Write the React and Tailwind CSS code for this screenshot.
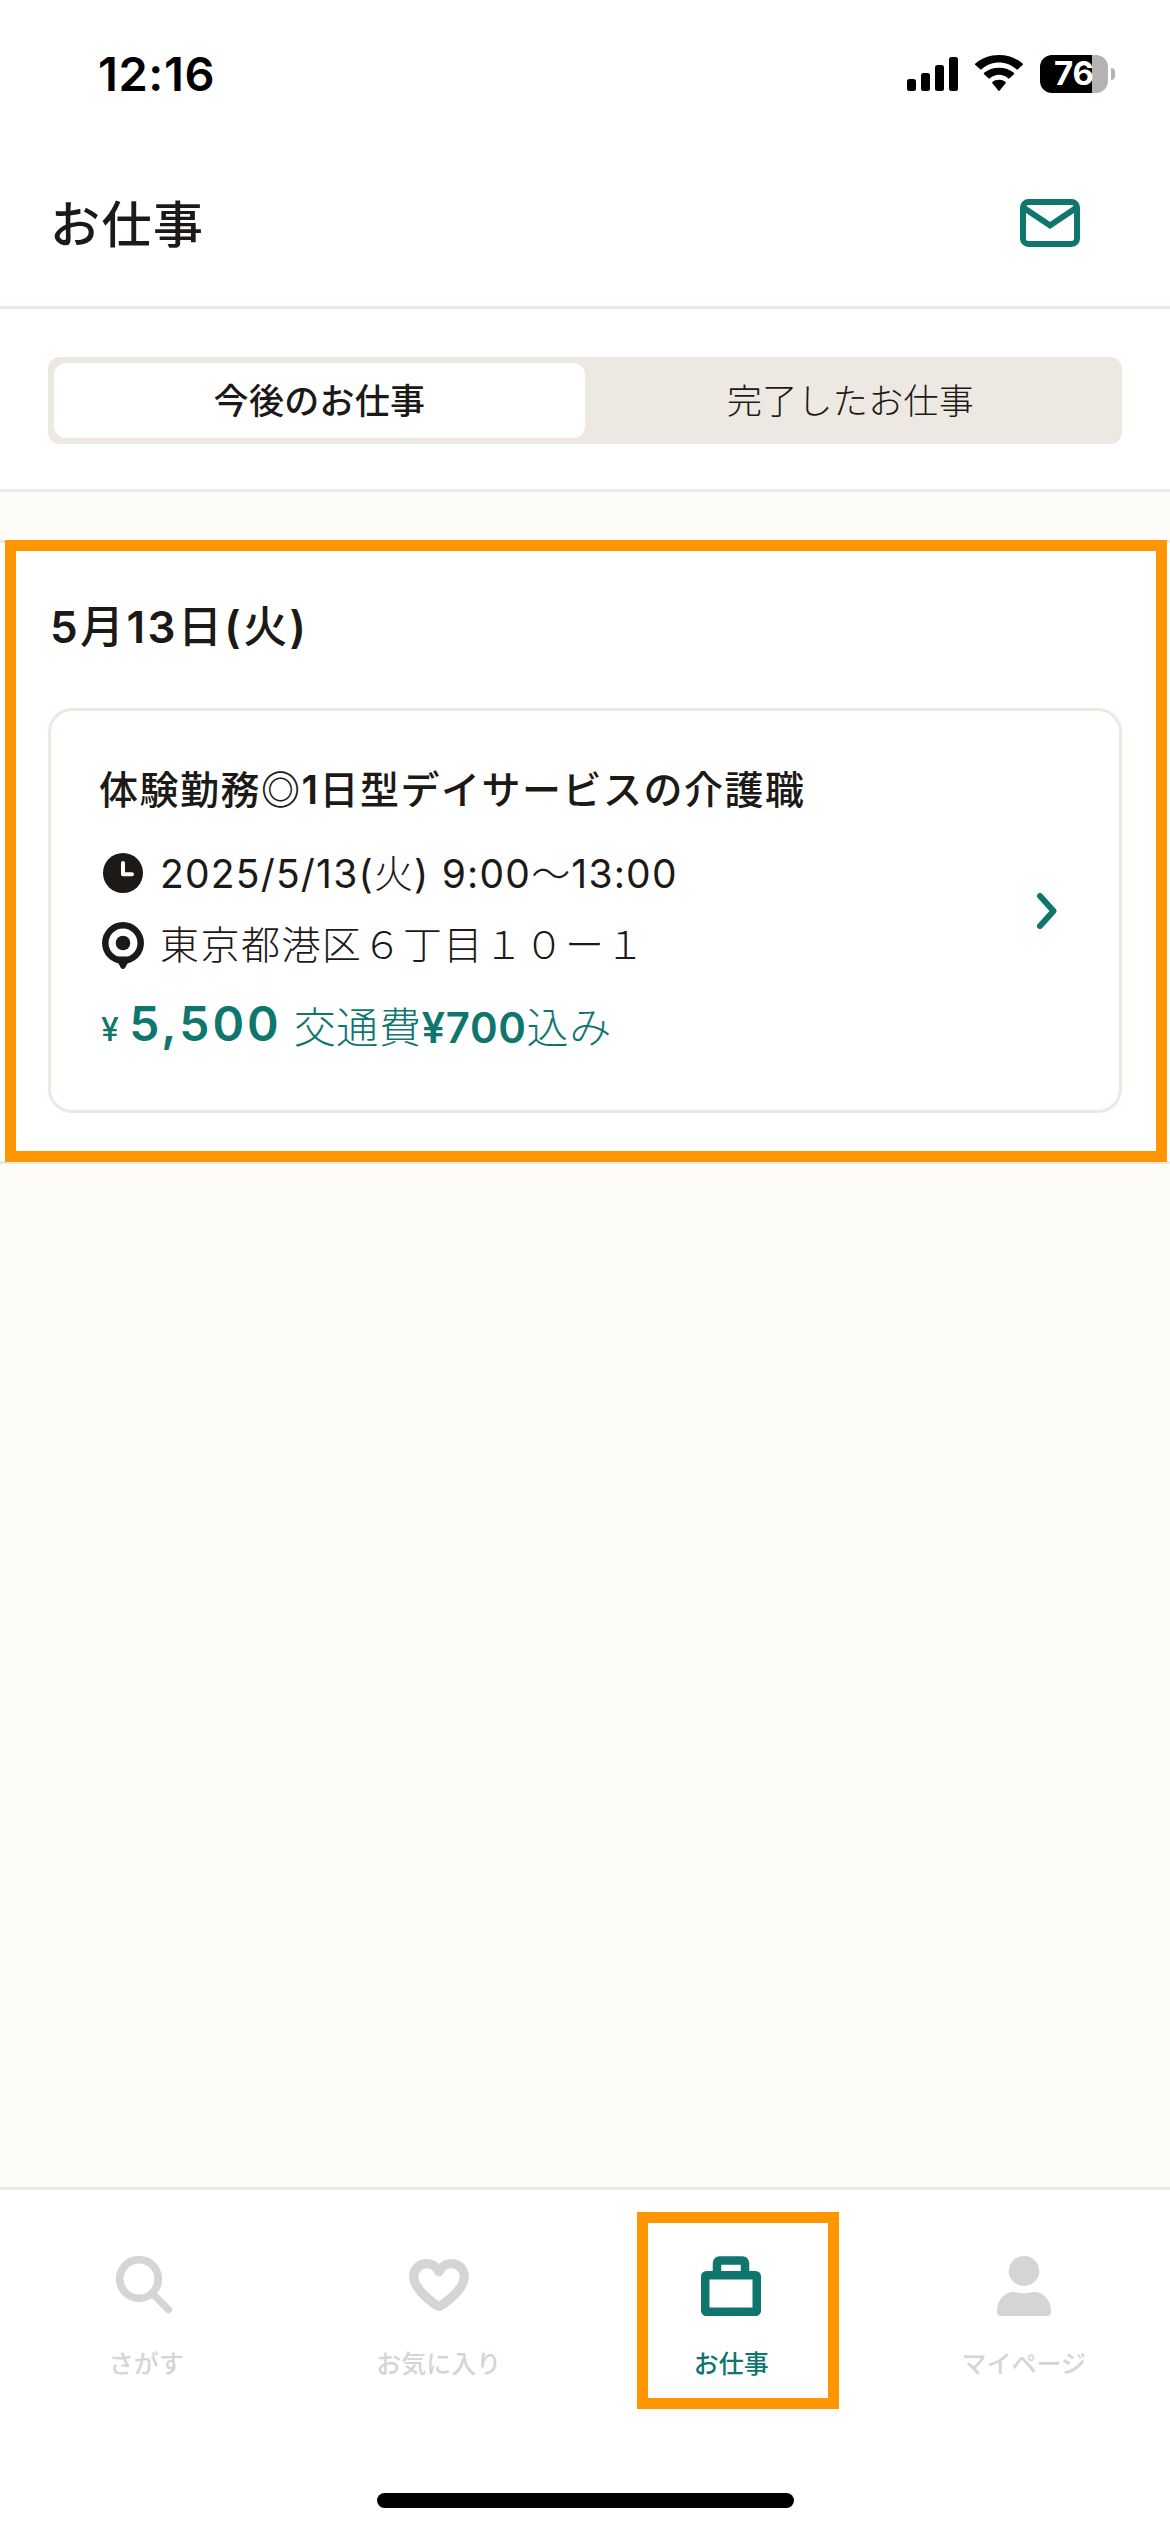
import React from "react";

const SignalIcon = () => (
    <svg className="w-[51px] h-[34px]" viewBox="0 0 51 34" fill="currentColor">
        <rect x="0" y="22" width="9" height="12" rx="2.5" />
        <rect x="14" y="16" width="9" height="18" rx="2.5" />
        <rect x="28" y="8" width="9" height="26" rx="2.5" />
        <rect x="42" y="0" width="9" height="34" rx="2.5" />
    </svg>
);

const WifiIcon = () => (
    <svg className="w-[48px] h-[36px]" viewBox="0 0 48 36" fill="currentColor">
        <path d="M24 7.4c6.7 0 12.8 2.6 17.4 6.9a1 1 0 0 0 1.4 0l4.8-4.3a1 1 0 0 0 0-1.5C41.3 3.2 33.1 0 24 0S6.7 3.2.4 8.5a1 1 0 0 0 0 1.5l4.8 4.3a1 1 0 0 0 1.4 0C11.2 10 17.3 7.4 24 7.4z" />
        <path d="M24 19.8c3.5 0 6.7 1.3 9.1 3.5a1 1 0 0 0 1.4 0l4.4-4a1 1 0 0 0 0-1.5C35 14.6 29.7 12.7 24 12.7S13 14.6 9.1 17.8a1 1 0 0 0 0 1.5l4.4 4a1 1 0 0 0 1.4 0c2.4-2.2 5.6-3.5 9.1-3.5z" />
        <path d="M30.6 28.2a.9.9 0 0 0 0-1.3A10.5 10.5 0 0 0 24 24.8c-2.5 0-4.8.8-6.6 2.1a.9.9 0 0 0 0 1.3l5.9 7.4a.9.9 0 0 0 1.4 0z" />
    </svg>
);

const MailIcon = () => (
    <svg
        className="w-[60px] h-[48px] text-[#0f766e]"
        viewBox="0 0 60 48"
        fill="none"
        stroke="currentColor"
        strokeWidth="6"
    >
        <rect x="3" y="3" width="54" height="42" rx="5.5" />
        <path d="M4 9l26 17.5L56 9" />
    </svg>
);

const ClockIcon = () => (
    <svg className="w-[42px] h-[42px]" viewBox="0 0 42 42">
        <circle cx="21" cy="21" r="20" fill="currentColor" />
        <path
            d="M21 11v11.2h9"
            fill="none"
            stroke="#fff"
            strokeWidth="4"
            strokeLinecap="round"
            strokeLinejoin="round"
        />
    </svg>
);

const PinIcon = () => (
    <svg className="w-[42px] h-[48px]" viewBox="0 0 42 48">
        <circle
            cx="21"
            cy="21"
            r="17.7"
            fill="none"
            stroke="currentColor"
            strokeWidth="6.5"
        />
        <circle cx="21" cy="21" r="7.3" fill="currentColor" />
        <path
            d="M12 34.5h18l-2.5 5.5c-2 0-2.5 3-4.5 6a2.4 2.4 0 0 1-4 0c-2-3-2.5-6-4.5-6z"
            fill="currentColor"
        />
    </svg>
);

const ChevronIcon = () => (
    <svg
        className="w-[20px] h-[36px] text-[#0f766e]"
        viewBox="0 0 20 36"
        fill="none"
        stroke="currentColor"
        strokeWidth="6"
        strokeLinecap="round"
        strokeLinejoin="round"
    >
        <path d="M3 3l13.5 15L3 33" />
    </svg>
);

const SearchIcon = () => (
    <svg
        className="w-[60px] h-[60px]"
        viewBox="0 0 60 60"
        fill="none"
        stroke="currentColor"
        strokeLinecap="round"
    >
        <circle cx="23" cy="23" r="19.3" strokeWidth="7.7" />
        <path d="M38 39l14.5 14.8" strokeWidth="7.2" />
    </svg>
);

const HeartIcon = () => (
    <svg
        className="w-[60px] h-[60px]"
        viewBox="0 0 60 60"
        fill="none"
        stroke="currentColor"
        strokeWidth="9.3"
        strokeLinecap="round"
        strokeLinejoin="round"
    >
        <path d="M30 50.4C24 47.5 4.7 33 4.7 21 4.7 13 10.5 7.7 17.5 7.7c6 0 10 3 12.5 8 2.5-5 6.5-8 12.5-8 7 0 12.8 5.3 12.8 13.3 0 12-19.3 26.5-25.3 29.4z" />
    </svg>
);

const BagIcon = () => (
    <svg
        className="w-[60px] h-[60px]"
        viewBox="0 0 60 60"
        fill="none"
        stroke="currentColor"
        strokeWidth="8.5"
    >
        <rect x="4.25" y="19.25" width="51.5" height="36.5" rx="1" />
        <path d="M16 19V7a2.5 2.5 0 0 1 2.5-2.5h23A2.5 2.5 0 0 1 44 7v12" />
    </svg>
);

const UserIcon = () => (
    <svg className="w-[60px] h-[60px]" viewBox="0 0 60 60" fill="currentColor">
        <ellipse cx="30" cy="15" rx="15.3" ry="15" />
        <path d="M3 55.5C3 44 10 36 20 36c3.5 0 5 1.2 10 1.2S36.5 36 40 36c10 0 17 8 17 19.5 0 3-1.5 4.5-4 4.5H7c-2.5 0-4-1.5-4-4.5z" />
    </svg>
);

const tabs = [
    { label: "さがす", icon: SearchIcon },
    { label: "お気に入り", icon: HeartIcon },
    { label: "お仕事", icon: BagIcon, active: true },
    { label: "マイページ", icon: UserIcon },
];

function StatusBar() {
    return (
        <div className="flex h-[150px] items-start justify-between pl-[98px] pr-[55px] text-black">
            <div className="mt-[45px] text-[47px] leading-[58px] font-semibold tracking-[0.6px]">
                12:16
            </div>
            <div className="mt-[55px] flex h-[38px] items-start">
                <div className="mt-[2px] mr-[17px]">
                    <SignalIcon />
                </div>
                <WifiIcon />
                <div className="ml-[17px] flex h-[38px] w-[68px] items-center justify-center rounded-[12px] bg-linear-to-r from-black from-[76.5%] to-[#b3b3b3] to-[76.5%] text-[33px] font-bold text-white">
                    76
                </div>
                <div className="ml-[3px] mt-[13px] h-[12px] w-[4px] rounded-r-full bg-[#b3b3b3]" />
            </div>
        </div>
    );
}

function JobCard() {
    return (
        <div className="mx-[48px] flex h-[405px] items-center justify-between rounded-[24px] border-[3px] border-[#ede8e1] pl-[48px] pr-[62px]">
            <div className="h-[399px] pt-[51px] text-[39px] tracking-[1.5px]">
                <h3 className="h-[54px] leading-[50px] font-medium whitespace-nowrap">
                    体験勤務
                    <span className="font-['Noto_Sans_CJK_JP',sans-serif] font-bold">
                        ◎
                    </span>
                    <span className="font-semibold">1</span>
                    日型デイサービスの介護職
                </h3>
                <div className="mt-[30px] flex h-[54px] items-center gap-[16px] pl-[3px]">
                    <ClockIcon />
                    <span className="pt-[2px] leading-[54px] tracking-[1.2px] whitespace-nowrap">
                        2025/5/13(<span className="font-light">火</span>){" "}
                        9:00<span className="font-light">〜</span>13:00
                    </span>
                </div>
                <div className="mt-[16px] flex h-[54px] items-center gap-[16px] pl-[3px]">
                    <div className="mt-[5px]">
                        <PinIcon />
                    </div>
                    <span className="pt-[3px] font-light leading-[54px] whitespace-nowrap">
                        東京都港区６丁目１０ー１
                    </span>
                </div>
                <div className="mt-[24px] h-[60px] pl-[2px] leading-[60px] whitespace-nowrap text-[#0f766e]">
                    <span className="text-[32px] font-medium">¥</span>
                    <span className="ml-[9px] text-[48px] font-semibold tracking-[3px]">
                        5,500
                    </span>
                    <span className="ml-[12px] align-[-2px] text-[42px] font-light tracking-[0.6px]">
                        交通費<span className="font-semibold">¥700</span>込み
                    </span>
                </div>
            </div>
            <ChevronIcon />
        </div>
    );
}

export default function App() {
    return (
        <div className="relative flex h-[2532px] w-[1170px] flex-col overflow-hidden bg-[#fdfcf8] font-['Inter','Noto_Sans_CJK_JP',sans-serif] text-[#1c1917]">
            <header className="h-[309px] border-b-[3px] border-[#ede8e1] bg-white">
                <StatusBar />
                <div className="flex h-[146px] items-center justify-between pl-[50px] pr-[90px]">
                    <h1 className="pt-[4px] text-[50px] leading-[60px] font-medium tracking-[1.5px]">
                        お仕事
                    </h1>
                    <MailIcon />
                </div>
            </header>

            <div className="h-[183px] border-b-[3px] border-[#ede8e1] bg-white px-[48px] pt-[48px]">
                <div className="grid h-[87px] grid-cols-2 rounded-[12px] bg-[#ede8e1] p-[6px] text-[35px] tracking-[0.3px]">
                    <div className="flex items-center justify-center rounded-[12px] bg-white pt-[2px] font-medium">
                        今後のお仕事
                    </div>
                    <div className="flex items-center justify-center pt-[2px] font-light">
                        完了したお仕事
                    </div>
                </div>
            </div>

            <section className="mt-[48px] h-[624px] border-y-[3px] border-[#ede8e1] bg-white">
                <h2 className="h-[165px] pt-[54px] pl-[50px] text-[44px] leading-[60px] font-semibold tracking-[2.4px]">
                    5<span className="font-medium">月</span>13
                    <span className="font-medium">日</span>(
                    <span className="font-medium">火</span>)
                </h2>
                <JobCard />
            </section>

            <nav className="mt-auto h-[345px] border-t-[3px] border-[#ede8e1] bg-white">
                <div className="grid h-[303px] grid-cols-4 pt-[66px]">
                    {tabs.map(({ label, icon: Icon, active }) => (
                        <div
                            key={label}
                            className={`flex flex-col items-center ${active ? "text-[#0f766e]" : "text-[#d6d5d3]"}`}
                        >
                            <Icon />
                            <span className="mt-[30px] text-[25px] leading-[36px] font-medium">
                                {label}
                            </span>
                        </div>
                    ))}
                </div>
                <div className="mx-auto h-[15px] w-[417px] rounded-full bg-black" />
            </nav>

            {/* highlight frames */}
            <div className="absolute left-[5px] top-[540px] h-[622px] w-[1162px] border-[11px] border-[#ff9500]" />
            <div className="absolute left-[637px] top-[2212px] h-[197px] w-[202px] border-[11px] border-[#ff9500]" />
        </div>
    );
}
